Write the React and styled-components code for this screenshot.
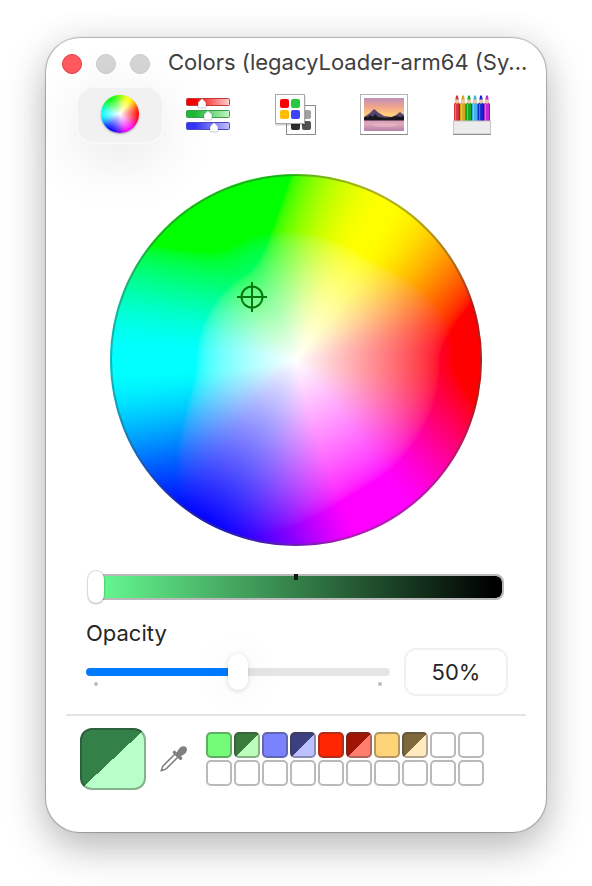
import React, { useLayoutEffect, useRef, useState } from "react";
import styled, { createGlobalStyle, css } from "styled-components";

const GlobalStyle = createGlobalStyle`
  *, *::before, *::after { box-sizing: border-box; }
  body {
    margin: 0;
    padding: 38px 46px 54px;
    background: #fff;
    font-family: Inter, "Liberation Sans", sans-serif;
    font-size: 22px;
    line-height: 24px;
    color: #262626;
  }
  button { padding: 0; border: 0; background: none; font: inherit; }
`;

/* ---------- colour maths ---------- */

const toLinear = (v) => (v <= 0.04045 ? v / 12.92 : ((v + 0.055) / 1.055) ** 2.4);
const toGamma = (v) => {
  if (v <= 0) return 0;
  if (v >= 1) return 1;
  return v <= 0.0031308 ? v * 12.92 : 1.055 * v ** (1 / 2.4) - 0.055;
};

function hueChannel(offset, hue, sat) {
  const k = (offset + hue / 60) % 6;
  const t = Math.max(0, Math.min(k, 4 - k, 1));
  return 1 - sat * t * t * (3 - 2 * t);
}

function wideToSrgb([r, g, b]) {
  const [lr, lg, lb] = [toLinear(r), toLinear(g), toLinear(b)];
  return [
    toGamma(1.2249 * lr - 0.2249 * lg),
    toGamma(-0.042 * lr + 1.042 * lg),
    toGamma(-0.0196 * lr - 0.0786 * lg + 1.0982 * lb),
  ];
}

function paintDisc(canvas, wide) {
  const size = canvas.width;
  const ctx = canvas.getContext("2d");
  const image = ctx.createImageData(size, size);
  const c = size / 2;
  for (let y = 0; y < size; y += 1) {
    for (let x = 0; x < size; x += 1) {
      const dx = x + 0.5 - c;
      const dy = c - y - 0.5;
      const hue = ((Math.atan2(dy, dx) * 180) / Math.PI + 360) % 360;
      const sat = Math.min(1, Math.hypot(dx, dy) / c);
      let rgb = [hueChannel(5, hue, sat), hueChannel(3, hue, sat), hueChannel(1, hue, sat)];
      if (wide) rgb = wideToSrgb(rgb);
      const i = (y * size + x) * 4;
      image.data[i] = rgb[0] * 255;
      image.data[i + 1] = rgb[1] * 255;
      image.data[i + 2] = rgb[2] * 255;
      image.data[i + 3] = 255;
    }
  }
  ctx.putImageData(image, 0, 0);
}

const DiscCanvas = styled.canvas`
  display: block;
  width: 100%;
  border-radius: 50%;
`;

function ColorDisc({ size, wide = false, label }) {
  const ref = useRef(null);
  useLayoutEffect(() => paintDisc(ref.current, wide), [wide]);
  return <DiscCanvas ref={ref} width={size} height={size} role="img" aria-label={label} />;
}

/* ---------- window ---------- */

const Panel = styled.main`
  padding-bottom: 42px;
  border-radius: 34px;
  background: #fff;
  box-shadow: 0 0 1px 1px rgba(0, 0, 0, 0.26), 0 16px 40px rgba(0, 0, 0, 0.26), 0 0 40px rgba(0, 0, 0, 0.06);
`;

const TitleBar = styled.header`
  display: flex;
  align-items: center;
  gap: 14px;
  height: 48px;
  padding: 4px 16px 0 16px;
`;

const WindowButton = styled.button`
  flex: none;
  width: 20px;
  height: 20px;
  border-radius: 50%;
  border: 1px solid ${(p) => (p.$close ? "#e2383f" : "#cbcbcb")};
  background: ${(p) => (p.$close ? "#ff5a5f" : "#d5d5d5")};
`;

const Title = styled.h1`
  min-width: 0;
  margin: 0 0 0 4px;
  padding-bottom: 4px;
  overflow: hidden;
  font-size: 22px;
  font-weight: 400;
  white-space: nowrap;
  color: #404040;
`;

/* ---------- toolbar ---------- */

const Toolbar = styled.nav`
  display: flex;
  justify-content: center;
`;

const ModeButton = styled.button`
  display: flex;
  align-items: center;
  justify-content: center;
  width: 88px;
  height: 58px;
  border-radius: 18px;
  ${(p) =>
    p.$active &&
    css`
      border: 2px solid #f9f9f9;
      background: #f1f1f1;
      box-shadow: 0 14px 60px rgba(0, 0, 0, 0.1);
    `}
`;

const MiniDisc = styled.span`
  display: block;
  width: 38px;
  margin-bottom: 2px;
  border-radius: 50%;
  box-shadow: 0 1px 2px rgba(0, 0, 0, 0.35);
`;

const Icon = styled.svg`
  display: block;
  width: 48px;
  height: 44px;
`;

function SlidersIcon() {
  const rows = [
    { y: 5, from: "#f40000", to: "#ffd0d0", edge: "#c43a3a", knob: 18 },
    { y: 17, from: "#1cb736", to: "#c4f7c4", edge: "#3f9a4a", knob: 24 },
    { y: 29, from: "#3434f5", to: "#c0c0ff", edge: "#4a4ac4", knob: 30 },
  ];
  return (
    <Icon viewBox="0 0 48 44" aria-hidden="true">
      {rows.map((r) => (
        <g key={r.y}>
          <linearGradient id={`bar${r.y}`}>
            <stop offset="0.2" stopColor={r.from} />
            <stop offset="1" stopColor={r.to} />
          </linearGradient>
          <rect x="2.5" y={r.y + 0.5} width="43" height="7" rx="1" fill={`url(#bar${r.y})`} stroke={r.edge} />
          <path
            d={`M${r.knob} ${r.y + 0.6}l4 4v4.400q0 1-1 1h-6q-1 0-1-1v-4.400z`}
            fill="#fff"
            stroke="#000"
            strokeOpacity="0.28"
            strokeWidth="0.7"
          />
        </g>
      ))}
    </Icon>
  );
}

function PaletteIcon() {
  return (
    <Icon viewBox="0 0 48 44" aria-hidden="true">
      <rect x="14.5" y="12.5" width="29" height="29" fill="#fff" stroke="#8a8a8a" />
      <rect x="30" y="17" width="9" height="9" rx="2" fill="#a2a2a2" />
      <rect x="19" y="28" width="9" height="9" rx="2" fill="#2e2e2e" />
      <rect x="30" y="28" width="9" height="9" rx="2" fill="#515151" />
      <rect x="3.5" y="3" width="30" height="29.5" fill="#000" opacity="0.18" />
      <rect x="3.5" y="1.5" width="29" height="29" fill="#fff" stroke="#a8a8a8" />
      <rect x="8" y="6" width="9" height="9" rx="2" fill="#fb0000" />
      <rect x="19" y="6" width="9" height="9" rx="2" fill="#28c940" />
      <rect x="8" y="17" width="9" height="9" rx="2" fill="#ffbd00" />
      <rect x="19" y="17" width="9" height="9" rx="2" fill="#4040ff" />
    </Icon>
  );
}

function PictureIcon() {
  return (
    <Icon viewBox="0 0 48 44" aria-hidden="true">
      <linearGradient id="sky" x2="0" y2="1">
        <stop offset="0" stopColor="#bd8fb6" />
        <stop offset="0.45" stopColor="#f2a48c" />
        <stop offset="0.85" stopColor="#ffcf7c" />
      </linearGradient>
      <linearGradient id="lake" x2="0" y2="1">
        <stop offset="0" stopColor="#d79bb4" />
        <stop offset="0.4" stopColor="#dfa9bd" />
        <stop offset="1" stopColor="#b37fa8" />
      </linearGradient>
      <rect x="0.5" y="1.5" width="47" height="40" fill="#fff" stroke="#b4b4b4" />
      <path d="M0 41.5h48" stroke="#888" />
      <rect x="4" y="5" width="40" height="20" fill="url(#sky)" />
      <rect x="4" y="27" width="40" height="11" fill="url(#lake)" />
      <path d="M4 24l3-2 3-2 4-4 5 4 5 3 8 1 4-2 4-3 4 3v4H4z" fill="#56466f" />
      <path d="M4 24l4 0 2-2 3 2 2-3 3 3 8 1 6-1 4-1 4 1 4-1v4.500H4z" fill="#17171d" />
      <ellipse cx="25" cy="32" rx="12" ry="2" fill="#f3c3cf" opacity="0.4" />
    </Icon>
  );
}

function PencilsIcon() {
  const pencils = ["#d8323a", "#d3a81c", "#1ba626", "#3fb2ea", "#1428cc", "#c028d0"];
  return (
    <Icon viewBox="0 0 48 44" aria-hidden="true">
      {pencils.map((color, i) => {
        const x = 6 + i * 6;
        return (
          <g key={color}>
            <path d={`M${x} 12l1.400-6h3.200l1.400 6z`} fill="#e6cba6" />
            <path d={`M${x + 1.3} 6.500l.7-3.500q1-1.500 2 0l.7 3.500z`} fill={color} />
            <path d={`M${x} 11q1.500-2 3 0 1.500-2 3 0v17h-6z`} fill={color} />
            <path d={`M${x + 1.6} 11v17`} stroke="#fff" strokeOpacity="0.3" strokeWidth="1.2" />
            <path d={`M${x + 5.5} 11v17`} stroke="#000" strokeOpacity="0.3" strokeWidth="1" />
          </g>
        );
      })}
      <rect x="5.5" y="28" width="37" height="13" fill="#ececec" stroke="#c4c4c4" />
      <path d="M5 41.5h38" stroke="#8e8e8e" />
    </Icon>
  );
}

/* ---------- wheel ---------- */

const Wheel = styled.section`
  position: relative;
  width: calc(100% - 128px);
  max-width: 372px;
  margin: 30px auto 25px;
  &::after {
    content: "";
    position: absolute;
    inset: 0;
    border: 2px solid rgba(70, 70, 70, 0.42);
    border-radius: 50%;
  }
`;

const Crosshair = styled.svg`
  position: absolute;
  z-index: 1;
  left: 38.2%;
  top: 33%;
  width: 30px;
  height: 30px;
  transform: translate(-50%, -50%);
`;

/* ---------- sliders ---------- */

const BrightnessField = styled.div`
  position: relative;
  margin: 0 42px 18px;
  &::after {
    content: "";
    position: absolute;
    top: 3px;
    left: calc(50% - 2px);
    width: 4px;
    height: 6px;
    background: #0c1a10;
    pointer-events: none;
  }
`;

const rangeReset = css`
  display: block;
  width: 100%;
  margin: 0;
  appearance: none;
  background: none;
`;

const BrightnessRange = styled.input`
  ${rangeReset}
  height: 32px;
  &::-webkit-slider-runnable-track {
    height: 26px;
    border: 2px solid #b9b9b9;
    border-radius: 8px;
    background: linear-gradient(90deg, #68ff94, #348049 50%, #000 98%) padding-box;
  }
  &::-webkit-slider-thumb {
    appearance: none;
    width: 16px;
    height: 32px;
    margin: -5px 0 0 -2px;
    border-radius: 8px;
    background: #fff;
    box-shadow: 0 0 2px rgba(0, 0, 0, 0.35), 0 1px 2px rgba(0, 0, 0, 0.2);
  }
`;

const OpacityLabel = styled.label`
  display: block;
  margin: 0 40px 3px;
`;

const OpacityRow = styled.div`
  display: flex;
  align-items: center;
  gap: 14px;
  margin: 0 38px 18px 40px;
`;

const OpacityField = styled.div`
  position: relative;
  flex: 1;
  &::before,
  &::after {
    content: "";
    position: absolute;
    top: 28px;
    width: 4px;
    height: 4px;
    border-radius: 50%;
    background: #bcbcbc;
  }
  &::before { left: 8px; }
  &::after { right: 8px; }
`;

const OpacityRange = styled.input`
  ${rangeReset}
  height: 36px;
  &::-webkit-slider-runnable-track {
    height: 8px;
    border-radius: 4px;
    background: linear-gradient(90deg, #007aff ${(p) => p.value}%, #e5e5e5 ${(p) => p.value}%);
  }
  &::-webkit-slider-thumb {
    appearance: none;
    width: 20px;
    height: 36px;
    margin-top: -14px;
    border-radius: 10px;
    background: #fff;
    box-shadow: 0 1px 5px rgba(0, 0, 0, 0.14), 0 2px 40px rgba(0, 0, 0, 0.08);
  }
`;

const OpacityValue = styled.input`
  width: 104px;
  height: 48px;
  padding: 0;
  border: 2px solid #f1f1f1;
  border-radius: 12px;
  background: #fff;
  font: inherit;
  color: inherit;
  text-align: center;
`;

/* ---------- swatches ---------- */

const Divider = styled.hr`
  height: 2px;
  margin: 0 20px 12px;
  border: 0;
  background: #e5e5e5;
`;

const SwatchRow = styled.footer`
  display: flex;
  align-items: flex-start;
  margin: 0 34px;
`;

const fill = (p) =>
  p.$dark ? `linear-gradient(to bottom right, ${p.$dark} 50%, ${p.$color} 50%)` : p.$color || "#fff";

const CurrentColor = styled.button`
  flex: none;
  width: 66px;
  height: 62px;
  border: 2px solid rgba(40, 40, 40, 0.36);
  border-radius: 12px;
  background: ${fill} border-box;
`;

const PickButton = styled.button`
  flex: none;
  margin: 16px 18px 0 12px;
  svg { display: block; width: 30px; height: 30px; }
`;

const SwatchGrid = styled.div`
  display: grid;
  grid-template-columns: repeat(10, 26px);
  gap: 2px;
  margin-top: 4px;
`;

const Swatch = styled.button`
  height: 26px;
  border: 2px solid ${(p) => (p.$color ? "rgba(60, 60, 60, 0.4)" : "#bababa")};
  border-radius: 5px;
  background: ${fill} border-box;
`;

const SAVED = [
  { name: "Green", color: "#74fb78" },
  { name: "Green, half opacity", color: "#bbfdba", dark: "#397c3b" },
  { name: "Blue", color: "#7a82ff" },
  { name: "Blue, half opacity", color: "#bcc0ff", dark: "#3c4080" },
  { name: "Red", color: "#ff2600" },
  { name: "Red, half opacity", color: "#ff7e6e", dark: "#a01404" },
  { name: "Gold", color: "#ffd479" },
  { name: "Gold, half opacity", color: "#ffe9bf", dark: "#7f693c" },
  ...Array.from({ length: 12 }, (_, i) => ({ name: `Empty ${i + 1}` })),
];

const MODES = [
  { name: "Color Wheel", icon: <MiniDisc><ColorDisc size={38} label="Color Wheel" /></MiniDisc> },
  { name: "Color Sliders", icon: <SlidersIcon /> },
  { name: "Color Palettes", icon: <PaletteIcon /> },
  { name: "Image Palettes", icon: <PictureIcon /> },
  { name: "Pencils", icon: <PencilsIcon /> },
];

export default function App() {
  const [mode, setMode] = useState("Color Wheel");
  const [brightness, setBrightness] = useState(0);
  const [opacity, setOpacity] = useState(50);

  return (
    <>
      <GlobalStyle />
      <Panel>
        <TitleBar>
          <WindowButton $close aria-label="Close" />
          <WindowButton aria-label="Minimize" disabled />
          <WindowButton aria-label="Zoom" disabled />
          <Title>Colors (legacyLoader-arm64 (Sy...</Title>
        </TitleBar>
        <Toolbar aria-label="Color picker">
          {MODES.map((m) => (
            <ModeButton
              key={m.name}
              $active={m.name === mode}
              aria-pressed={m.name === mode}
              aria-label={m.name}
              onClick={() => setMode(m.name)}
            >
              {m.icon}
            </ModeButton>
          ))}
        </Toolbar>
        <Wheel>
          <ColorDisc size={372} wide label="Hue and saturation" />
          <Crosshair viewBox="0 0 30 30" fill="none" stroke="#067a0c" strokeWidth="2" aria-hidden="true">
            <circle cx="15" cy="15" r="10.5" />
            <path d="M15 0v30M0 15h30" />
          </Crosshair>
        </Wheel>
        <BrightnessField>
          <BrightnessRange
            type="range"
            aria-label="Brightness"
            value={brightness}
            onChange={(e) => setBrightness(Number(e.target.value))}
          />
        </BrightnessField>
        <OpacityLabel htmlFor="opacity">Opacity</OpacityLabel>
        <OpacityRow>
          <OpacityField>
            <OpacityRange
              id="opacity"
              type="range"
              value={opacity}
              onChange={(e) => setOpacity(Number(e.target.value))}
            />
          </OpacityField>
          <OpacityValue
            aria-label="Opacity percentage"
            value={`${opacity}%`}
            onChange={(e) => setOpacity(Math.min(100, parseInt(e.target.value, 10) || 0))}
          />
        </OpacityRow>
        <Divider />
        <SwatchRow>
          <CurrentColor $color="#b9ffc9" $dark="#348049" aria-label="Current color" />
          <PickButton aria-label="Pick a color from the screen">
            <svg viewBox="0 0 30 30" aria-hidden="true">
              <path
                d="M17.500 9.500L5.500 21.500q-1 1-1.500 3l-.8 2.300 2.300-.8q2-.5 3-1.500l12-12"
                fill="#fff"
                stroke="#808080"
                strokeWidth="1.6"
                strokeLinejoin="round"
              />
              <path
                d="M15.200 7.200q1.200-1.200 2.400 0l1.200 1.200q.6-1.600 1.700-3 2-3.400 5-3.200 3.600.3 3.500 3.700-.3 2.700-3.300 4.600-1.300 1-2.900 1.600l1 1q1.200 1.200 0 2.400-1.200 1.200-2.400 0l-6.200-6q-1.200-1.200 0-2.300z"
                fill="#808080"
              />
            </svg>
          </PickButton>
          <SwatchGrid>
            {SAVED.map((s) => (
              <Swatch key={s.name} $color={s.color} $dark={s.dark} aria-label={s.name} />
            ))}
          </SwatchGrid>
        </SwatchRow>
      </Panel>
    </>
  );
}
